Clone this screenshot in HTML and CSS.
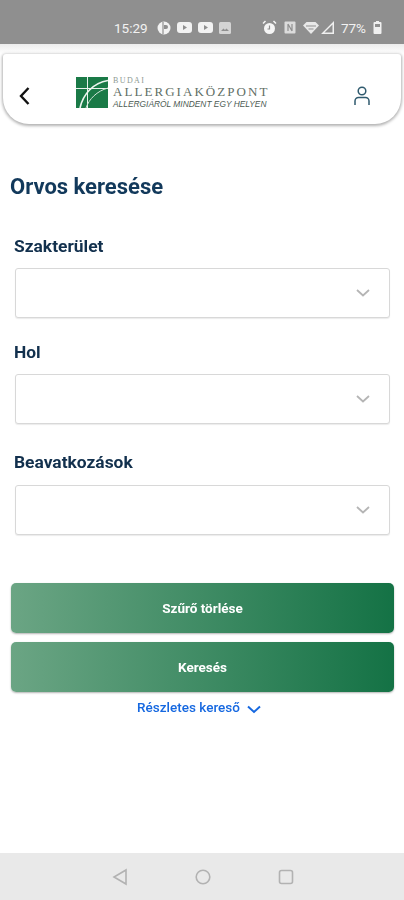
FILE: index.html
```html
<!DOCTYPE html>
<html lang="hu">
<head>
    <meta charset="UTF-8">
    <meta name="viewport" content="width=device-width, initial-scale=1.0">
    <title>Orvos keresése</title>
    <link rel="stylesheet" href="styles.css">
</head>
<body>
<div class="screen">

    <!-- Status bar -->
    <div class="status-bar">
        <span class="clock">15:29</span>
        <svg class="st-icon" width="14" height="14" viewBox="0 0 14 14"><circle cx="7" cy="7" r="6.500" fill="#f2f2f2"/><path d="M6 1v12" stroke="#8f8f8f" stroke-width="1.200"/><path d="M7 4h2a2 2 0 0 1 0 4H7z" fill="#8f8f8f"/></svg>
        <svg class="st-icon" width="15" height="11" viewBox="0 0 15 11"><rect width="15" height="11" rx="3" fill="#f2f2f2"/><path d="M6 3l4 2.500L6 8z" fill="#8f8f8f"/></svg>
        <svg class="st-icon" width="15" height="11" viewBox="0 0 15 11"><rect width="15" height="11" rx="3" fill="#f2f2f2"/><path d="M6 3l4 2.500L6 8z" fill="#8f8f8f"/></svg>
        <svg class="st-icon" width="12" height="12" viewBox="0 0 12 12"><rect width="12" height="12" rx="1.500" fill="#d4d4d4"/><path d="M2 9l2.500-2.500L6 8l1.500-1.500L10 9z" fill="#8f8f8f"/></svg>
        <span class="status-right">
            <svg width="15" height="15" viewBox="0 0 15 15"><circle cx="7.500" cy="8.500" r="5.500" fill="#f5f5f5"/><path d="M7.500 5.500v3.500h-2" fill="none" stroke="#8f8f8f" stroke-width="1.200"/><path d="M1 3.500L3.500 1M14 3.500L11.500 1" stroke="#f5f5f5" stroke-width="1.500"/></svg>
            <svg width="12" height="13" viewBox="0 0 12 13"><rect x=".5" y=".5" width="11" height="12" rx="1" fill="#dcdcdc"/><path d="M4 3v7M8 3v7M4 3l4 7" stroke="#8f8f8f" stroke-width="1.200" fill="none"/></svg>
            <svg class="wifi" width="16" height="12" viewBox="0 0 16 12"><path d="M0 3.500L3.500 0h9L16 3.500 8 12z" fill="#e8e8e8"/><path d="M3 4h10M5.500 7h5" stroke="#8f8f8f"/></svg>
            <svg class="signal" width="13" height="13" viewBox="0 0 13 13"><path d="M13 0v13H0zM11.500 3.500L3.500 11.500h8z" fill="#f0f0f0" fill-rule="evenodd"/></svg>
            <span class="battery-text">77%</span>
            <svg width="9" height="13" viewBox="0 0 8 13"><path d="M2.500 0h3v1H7a1 1 0 0 1 1 1v10a1 1 0 0 1-1 1H1a1 1 0 0 1-1-1V2a1 1 0 0 1 1-1h1.500z" fill="#f0f0f0"/><rect x="1.500" y="3" width="5" height="3" fill="#8f8f8f"/></svg>
        </span>
    </div>

    <!-- App header -->
    <div class="header-wrap">
        <header class="app-header">
            <svg class="back-icon" width="13" height="20" viewBox="0 0 13 20"><path d="M10.500 2L3 10l7.500 8" fill="none" stroke="#111" stroke-width="2.400"/></svg>
            <div class="logo">
                <svg class="logo-mark" width="32" height="31" viewBox="0 0 32 31">
                    <rect width="32" height="31" fill="#1a7a47"/>
                    <path d="M0 11.500h32M11.500 0v31" stroke="#e8f2ec" stroke-width="1"/>
                    <path d="M4 31C7 17 17 6 32 3.500" fill="none" stroke="#eef5f0" stroke-width="1.600"/>
                    <path d="M10 31C13 22 21 14 32 11" fill="none" stroke="#cfe3d7" stroke-width="1"/>
                </svg>
                <div class="logo-text">
                    <div class="logo-small">BUDAI</div>
                    <div class="logo-name">ALLERGIAKÖZPONT</div>
                    <div class="logo-slogan">ALLERGIÁRÓL MINDENT EGY HELYEN</div>
                </div>
            </div>
            <svg class="user-icon" width="18" height="20" viewBox="0 0 18 20"><circle cx="9" cy="5" r="3.800" fill="none" stroke="#2f5a6e" stroke-width="1.500"/><path d="M2 19v-4a3.500 3.500 0 0 1 3.500-3.500h7A3.500 3.500 0 0 1 16 15v4" fill="none" stroke="#2f5a6e" stroke-width="1.500"/></svg>
        </header>
    </div>

    <!-- Search form -->
    <main class="content">
        <h1>Orvos keresése</h1>

        <div class="field field-first">
            <label>Szakterület</label>
            <div class="select-box">
                <svg width="14" height="8" viewBox="0 0 14 8"><path d="M1 1l6 5.500L13 1" fill="none" stroke="#b5b5b5" stroke-width="1.800"/></svg>
            </div>
        </div>
        <div class="field field-second">
            <label>Hol</label>
            <div class="select-box">
                <svg width="14" height="8" viewBox="0 0 14 8"><path d="M1 1l6 5.500L13 1" fill="none" stroke="#b5b5b5" stroke-width="1.800"/></svg>
            </div>
        </div>
        <div class="field field-third">
            <label>Beavatkozások</label>
            <div class="select-box">
                <svg width="14" height="8" viewBox="0 0 14 8"><path d="M1 1l6 5.500L13 1" fill="none" stroke="#b5b5b5" stroke-width="1.800"/></svg>
            </div>
        </div>

        <div class="actions">
            <button class="green-btn">Szűrő törlése</button>
            <button class="green-btn">Keresés</button>
        </div>
        <a class="more-link">Részletes kereső
            <svg width="14" height="9" viewBox="0 0 14 9"><path d="M1 1.500l6 5.500 6-5.500" fill="none" stroke="#1668e0" stroke-width="2"/></svg>
        </a>
    </main>

    <!-- Android navigation -->
    <nav class="nav-bar">
        <svg width="16" height="18" viewBox="0 0 16 18"><path d="M14 2v14L2 9z" fill="none" stroke="#b2b2b2" stroke-width="1.600"/></svg>
        <svg width="16" height="16" viewBox="0 0 16 16"><circle cx="8" cy="8" r="6.800" fill="none" stroke="#b2b2b2" stroke-width="1.600"/></svg>
        <svg width="16" height="16" viewBox="0 0 16 16"><rect x="1.500" y="1.500" width="13" height="13" rx="2" fill="none" stroke="#b2b2b2" stroke-width="1.600"/></svg>
    </nav>
</div>
</body>
</html>
```

FILE: styles.css
```css
* {
    box-sizing: border-box;
}

body {
    margin: 0;
    background-color: white;
    font-family: 'Roboto', sans-serif;
}

.screen {
    width: 404px;
    height: 900px;
    display: flex;
    flex-direction: column;
    overflow: hidden;
    filter: blur(0.5px);
}

.status-bar {
    height: 44px;
    flex-shrink: 0;
    background-color: #8f8f8f;
    color: #f2f2f2;
    display: flex;
    align-items: center;
    padding: 11px 22px 0 114px;
    font-size: 13.5px;
}

.clock {
    margin-right: 9px;
}

.st-icon {
    margin-right: 6px;
}

.status-right {
    margin-left: auto;
    display: flex;
    align-items: center;
    gap: 7px;
}

.signal {
    margin-left: -5px;
}

.battery-text {
    font-size: 13.5px;
}

.header-wrap {
    height: 80px;
    flex-shrink: 0;
    padding: 10px 3px 0;
    background: linear-gradient(#ececec, #ffffff 10px);
}

.app-header {
    height: 70px;
    background-color: white;
    border-radius: 3px 3px 26px 26px;
    box-shadow: 0 1px 3px 1px rgba(0, 0, 0, 0.3);
    display: flex;
    align-items: center;
    padding: 14px 0 0 15px;
}

.back-icon {
    margin-right: 45px;
}

.logo {
    display: flex;
    align-items: center;
    width: 277px;
    margin-bottom: 7px;
}

.logo-mark {
    flex-shrink: 0;
    margin-right: 5px;
}

.logo-text {
    font-family: 'Liberation Serif', serif;
    color: #6e7d74;
    white-space: nowrap;
}

.logo-small {
    font-size: 8px;
    line-height: 8px;
    letter-spacing: 1.4px;
    color: #8e9a92;
}

.logo-name {
    font-size: 13px;
    line-height: 14px;
    letter-spacing: 2.05px;
    color: #5f6f66;
}

.logo-slogan {
    font-family: 'Liberation Sans', sans-serif;
    font-style: italic;
    font-size: 8.4px;
    line-height: 10px;
    color: #4c5a52;
}

.content {
    flex: 1;
    padding: 0 10px;
}

h1 {
    margin: 50px 0 0;
    font-size: 22px;
    line-height: 26px;
    font-weight: 700;
    color: #12395b;
}

.field {
    padding: 0 4px 0 4px;
}

.field-first {
    margin-top: 36px;
}

.field-second {
    margin-top: 24px;
}

.field-third {
    margin-top: 28px;
}

.field label {
    display: block;
    font-size: 17.4px;
    line-height: 20px;
    font-weight: 700;
    color: #12304d;
    margin-bottom: 12px;
}

.field-third label {
    margin-bottom: 13px;
}

.select-box {
    margin-left: 1px;
    height: 50px;
    background-color: white;
    border: 1px solid #d8d8d8;
    border-radius: 3px;
    box-shadow: 0 1px 1px rgba(0, 0, 0, 0.08);
    display: flex;
    align-items: center;
    justify-content: flex-end;
    padding-right: 19px;
}

.actions {
    margin-top: 48px;
    padding-left: 1px;
    display: flex;
    flex-direction: column;
    gap: 9px;
}

.green-btn {
    height: 50px;
    border: none;
    border-radius: 5px;
    background: linear-gradient(90deg, #6ba584, #147245);
    box-shadow: 0 1px 2px rgba(0, 0, 0, 0.3);
    color: white;
    font-family: 'Roboto', sans-serif;
    font-size: 13.5px;
    font-weight: 700;
}

.more-link {
    display: flex;
    justify-content: center;
    align-items: center;
    gap: 7px;
    margin-top: 6px;
    padding-right: 6px;
    font-size: 13.5px;
    line-height: 18px;
    font-weight: 500;
    color: #1668e0;
}

.more-link svg {
    margin-top: 5px;
}

.nav-bar {
    height: 47px;
    flex-shrink: 0;
    background-color: #e9e9e9;
    display: flex;
    justify-content: center;
    align-items: center;
    gap: 67px;
    padding-left: 2px;
}
```
